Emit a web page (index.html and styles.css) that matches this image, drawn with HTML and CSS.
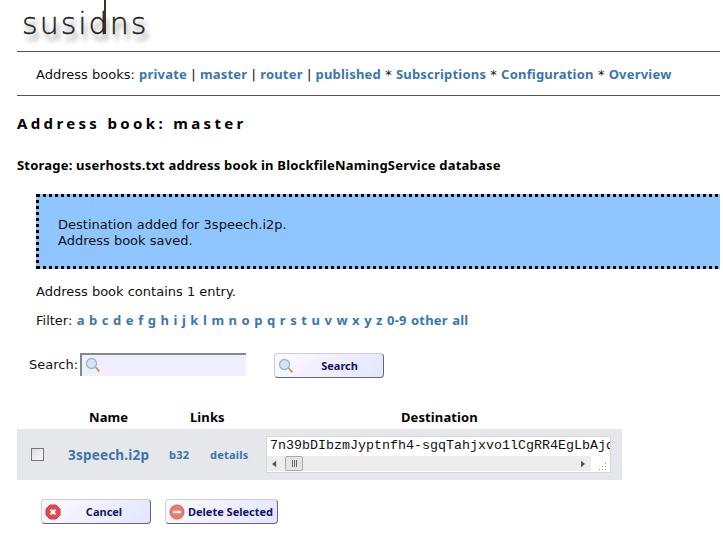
FILE: index.html
```html
<!DOCTYPE html>
<html lang="en">
  <head>
    <meta charset="UTF-8" />
    <title>susidns</title>
    <link rel="stylesheet" href="styles.css">
  </head>
  <body>
    <div class="page">
      <div class="logo">susi<span class="logo-d">d</span>ns</div>
      <hr class="rule" />
      <div class="navbar">
        Address books: <a href="#">private</a> | <a href="#">master</a> | <a href="#">router</a> |
        <a href="#">published</a> * <a href="#">Subscriptions</a> * <a href="#">Configuration</a> *
        <a href="#">Overview</a>
      </div>
      <hr class="rule" />
      <h3 class="book-title">Address book: master</h3>
      <h4 class="storage">Storage: userhosts.txt address book in BlockfileNamingService database</h4>

      <div class="messages">
        Destination added for 3speech.i2p.<br />
        Address book saved.
      </div>

      <p class="count">Address book contains 1 entry.</p>
      <p class="filter">
        Filter:
        <a href="#">a</a> <a href="#">b</a> <a href="#">c</a> <a href="#">d</a> <a href="#">e</a>
        <a href="#">f</a> <a href="#">g</a> <a href="#">h</a> <a href="#">i</a> <a href="#">j</a>
        <a href="#">k</a> <a href="#">l</a> <a href="#">m</a> <a href="#">n</a> <a href="#">o</a>
        <a href="#">p</a> <a href="#">q</a> <a href="#">r</a> <a href="#">s</a> <a href="#">t</a>
        <a href="#">u</a> <a href="#">v</a> <a href="#">w</a> <a href="#">x</a> <a href="#">y</a>
        <a href="#">z</a> <a href="#">0-9</a> <a href="#">other</a> <a href="#">all</a>
      </p>

      <div class="search">
        <label class="search-label">Search:</label>
        <div class="search-box">
          <svg class="lens" viewBox="0 0 16 16">
            <path d="M9.5 10l1-1 4.5 4.5-1.5 1.5z" fill="#c9935a" />
            <circle cx="6.5" cy="6.5" r="5" fill="#d3e4f5" stroke="#9db4cc" stroke-width="1.3" />
          </svg>
        </div>
        <button class="btn btn-search">
          <svg class="lens" viewBox="0 0 16 16">
            <path d="M9.5 10l1-1 4.5 4.5-1.5 1.5z" fill="#c9935a" />
            <circle cx="6.5" cy="6.5" r="5" fill="#d3e4f5" stroke="#9db4cc" stroke-width="1.3" />
          </svg>
          <span>Search</span>
        </button>
      </div>

      <div class="book">
        <div class="book-head">
          <div class="col-name">Name</div>
          <div class="col-links">Links</div>
          <div class="col-dest">Destination</div>
        </div>
        <div class="book-row">
          <span class="fake-check"></span>
          <a class="host" href="#">3speech.i2p</a>
          <a class="small-link b32" href="#">b32</a>
          <a class="small-link details" href="#">details</a>
          <div class="dest">
            <div class="dest-text">7n39bDIbzmJyptnfh4-sgqTahjxvo1lCgRR4EgLbAjq</div>
            <div class="dest-bottom">
              <div class="hscroll">
                <svg class="arrow" viewBox="0 0 6 8"><path d="M5 0v8L0 4z" fill="#555" /></svg>
                <span class="thumb">
                  <i></i><i></i><i></i>
                </span>
                <svg class="arrow arrow-right" viewBox="0 0 6 8"><path d="M0 0v8l5-4z" fill="#555" /></svg>
              </div>
              <svg class="grip" viewBox="0 0 9 9">
                <path d="M8 1h1v1H8zM5 4h1v1H5zM8 4h1v1H8zM2 7h1v1H2zM5 7h1v1H5zM8 7h1v1H8z" fill="#999" />
              </svg>
            </div>
          </div>
        </div>
      </div>

      <div class="actions">
        <button class="btn btn-cancel">
          <svg class="icon" viewBox="0 0 16 16">
            <path d="M5 1h6l4 4v6l-4 4H5l-4-4V5z" fill="#e8484a" stroke="#c93a3c" />
            <path d="M5.5 5.5l5 5M10.5 5.5l-5 5" stroke="#fff" stroke-width="2.2" />
          </svg>
          <span>Cancel</span>
        </button>
        <button class="btn btn-delete">
          <svg class="icon" viewBox="0 0 16 16">
            <circle cx="8" cy="8" r="7" fill="#ec7d6e" stroke="#d8604f" />
            <path d="M4 8h8" stroke="#fff" stroke-width="2.4" />
          </svg>
          <span>Delete Selected</span>
        </button>
      </div>
    </div>
  </body>
</html>
```

FILE: styles.css
```css
html, body {
  overflow: hidden;
}
body {
  margin: 0;
  background: white;
  color: #111;
  font-family: "DejaVu Sans", sans-serif;
  font-size: 13px;
}
.page {
  width: 720px;
  height: 536px;
  overflow: hidden;
}
a {
  color: #3a76ad;
  font-family: "Noto Sans", sans-serif;
  font-weight: bold;
  letter-spacing: 0.2px;
  text-decoration: none;
}
.logo {
  height: 51px;
  padding-left: 22px;
  box-sizing: border-box;
  font-weight: 200;
  font-size: 30px;
  line-height: 48px;
  letter-spacing: 2px;
  color: #222;
  -webkit-text-stroke: 0.4px #222;
  text-shadow: 3px 6px 5px #777;
}
.logo-d {
  position: relative;
}
.logo-d::after {
  content: "";
  position: absolute;
  right: 4px;
  top: -8px;
  width: 2px;
  height: 36px;
  background: #333;
}
.rule {
  margin: 0 0 0 17px;
  border: none;
  border-top: 1px solid #555;
}
.navbar {
  height: 43px;
  line-height: 45px;
  padding-left: 36px;
  white-space: nowrap;
  word-spacing: 0.1px;
}
.book-title {
  margin: 17px 0 0 17px;
  font-family: "Noto Sans", sans-serif;
  font-size: 15px;
  line-height: 20px;
  letter-spacing: 3.35px;
  color: #000;
}
.storage {
  margin: 24px 0 0 17px;
  font-family: "Noto Sans", sans-serif;
  font-size: 13px;
  line-height: 17px;
  letter-spacing: 0.2px;
  color: #000;
}
.messages {
  margin: 20px 0 0 36px;
  width: 720px;
  height: 75px;
  box-sizing: border-box;
  padding: 20px 19px;
  background: #90c6ff;
  border: 3px dotted #000;
  line-height: 16px;
}
.count {
  margin: 14px 0 0 36px;
  line-height: 17px;
}
.filter {
  margin: 12px 0 0 36px;
  line-height: 17px;
  white-space: nowrap;
  word-spacing: 0.2px;
}
.search {
  margin-top: 24px;
  display: flex;
  align-items: flex-start;
  padding-left: 29px;
}
.search-label {
  line-height: 24px;
  margin-right: 2px;
}
.search-box {
  width: 166px;
  height: 23px;
  box-sizing: border-box;
  background: #efefff;
  border-top: 2px solid #888;
  border-left: 2px solid #888;
  padding: 2px 0 0 3px;
}
.lens {
  width: 16px;
  height: 16px;
  display: block;
}
.btn {
  display: flex;
  align-items: center;
  height: 25px;
  box-sizing: border-box;
  padding: 0 3px;
  background: linear-gradient(135deg, #fbfbff 0%, #e4e4ff 100%);
  border: 1px solid #ccccdd;
  border-right: 1px solid #667;
  border-bottom: 1px solid #667;
  border-radius: 4px;
  color: #151565;
  font-family: "Noto Sans", sans-serif;
  font-size: 11px;
  font-weight: bold;
  white-space: nowrap;
}
.btn span {
  flex: 1;
  text-align: center;
}
.btn-search {
  width: 110px;
  margin-left: 28px;
}
.btn-search span {
  padding-left: 5px;
}
.btn-cancel {
  width: 110px;
}
.btn-delete {
  width: 113px;
}
.btn-delete span {
  padding-left: 2px;
}
.icon {
  width: 16px;
  height: 16px;
  flex: none;
}
.book {
  margin: 28px 0 0 17px;
  width: 605px;
}
.book-head {
  display: flex;
  height: 23px;
  line-height: 22px;
  font-family: "Noto Sans", sans-serif;
  font-weight: bold;
  letter-spacing: 0.1px;
  color: #000;
}
.col-name {
  margin-left: 72px;
  width: 101px;
}
.col-links {
  width: 211px;
}
.col-dest {
  white-space: nowrap;
}
.book-row {
  display: flex;
  align-items: center;
  height: 51px;
  background: #e6e7ea;
}
.fake-check {
  width: 11px;
  height: 11px;
  margin-left: 14px;
  background: linear-gradient(135deg, #ddd, #fafafa);
  border: 1px solid #777;
}
.host {
  margin-left: 24px;
  font-size: 13.5px;
  width: 101px;
  white-space: nowrap;
}
.small-link {
  font-size: 11px;
}
.b32 {
  width: 41px;
}
.details {
  width: 56px;
}
.dest {
  width: 345px;
  height: 37px;
  box-sizing: border-box;
  background: white;
  border: 1px solid #d8d8d8;
  overflow: hidden;
}
.dest-text {
  height: 19px;
  padding-left: 3px;
  font-family: "Liberation Mono", monospace;
  font-size: 13.33px;
  line-height: 18px;
  white-space: nowrap;
  overflow: hidden;
}
.dest-bottom {
  display: flex;
  align-items: center;
}
.hscroll {
  flex: 1;
  height: 15px;
  display: flex;
  align-items: center;
  background: #ededed;
  padding: 0 5px 0 5px;
}
.arrow {
  width: 5px;
  height: 8px;
  flex: none;
}
.arrow-right {
  margin-left: auto;
}
.thumb {
  margin-left: 8px;
  width: 16px;
  height: 13px;
  display: flex;
  justify-content: center;
  gap: 1px;
  align-items: center;
  background: #e4e4e4;
  border: 1px solid #aaa;
  border-radius: 2px;
}
.thumb i {
  width: 1px;
  height: 7px;
  background: #666;
}
.grip {
  width: 9px;
  height: 9px;
  margin: 5px 4px 0 6px;
  flex: none;
}
.actions {
  display: flex;
  gap: 14px;
  margin: 19px 0 0 41px;
}
```
